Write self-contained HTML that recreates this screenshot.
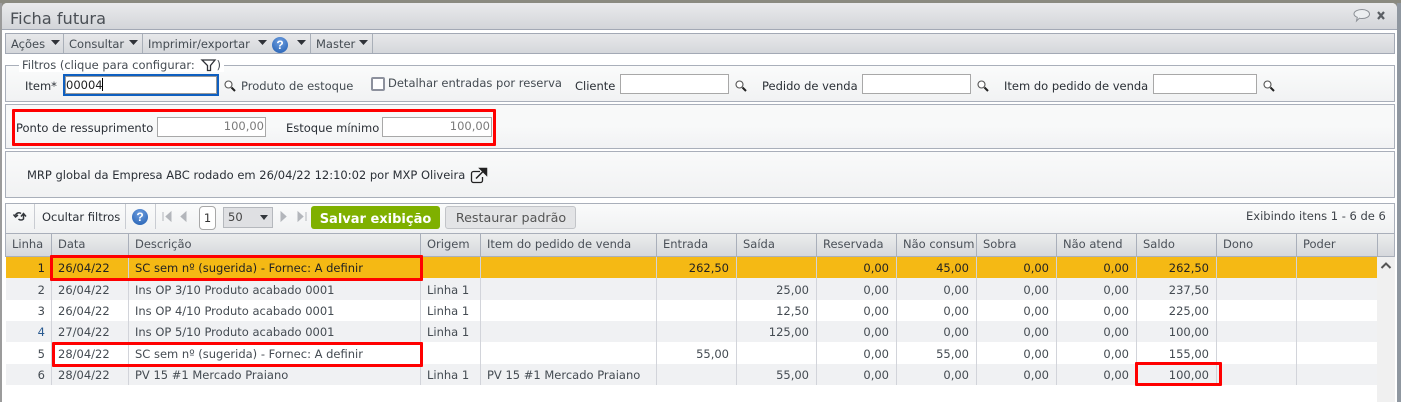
<!DOCTYPE html>
<html><head><meta charset="utf-8">
<style>
html,body{margin:0;padding:0;width:1401px;height:402px;overflow:hidden;background:#8d8d85}
*{box-sizing:border-box}
body{font-family:"DejaVu Sans","Liberation Sans",sans-serif;font-size:11.5px;color:#444b52;position:relative}
.a{position:absolute;white-space:nowrap}
.t{position:absolute;white-space:nowrap;line-height:14px}
#win{position:absolute;left:2px;top:3px;width:1395px;height:399px;background:#fff;border-radius:5px 5px 0 0}
.inp{position:absolute;background:#fff;border:1px solid #a8a8a8}
.r{text-align:right;color:#7b7b7b}
.red{position:absolute;border:3px solid #f00;z-index:5;border-radius:1px}
.row{position:absolute;left:6px;width:1371px}
.vl{position:absolute;width:1px;background:#d2d4da;top:257px;height:128px}
.c{position:absolute;white-space:nowrap;line-height:14px}
.h{position:absolute;white-space:nowrap;top:237px;line-height:14px;color:#4a5058;z-index:3}
.hs{position:absolute;top:233px;height:24px;width:1px;background:#a9afba;z-index:3}
.ts{position:absolute;width:1px;background:#a9afb8}
</style></head><body>
<div id="win"></div>
<div class="a" style="left:0;top:0;width:1401px;height:3px;background:#8a8a80"></div>
<div class="a" style="left:0;top:3px;width:2px;height:399px;background:#9b9b9b"></div>
<div class="a" style="left:1397px;top:3px;width:4px;height:399px;background:#8f97a0"></div>

<!-- Title -->
<div class="a" style="left:2px;top:3px;width:1395px;height:27px;background:linear-gradient(#e9eaec,#d3d5d9);border-bottom:1px solid #a3a9b5;border-radius:5px 5px 0 0"></div>
<div class="t" style="left:10px;top:10px;font-size:16.2px;line-height:17px;color:#4a4f55">Ficha futura</div>
<svg class="a" style="left:1353px;top:8px" width="34" height="16" viewBox="0 0 34 16">
<path d="M9 1.500c4 0 7.500 1.900 7.500 4.600S13 10.500 9 10.500c-1 0-1.800 0-2.600-.3L3.500 13l.8-3.700C2.300 8.500 1 7.300 1 6c0-2.700 4-4.500 8-4.500z" fill="#eceef0" stroke="#8b8f95" stroke-width="1"/>
<path d="M25 4l6 7M31 4l-6 7" stroke="#5b5f64" stroke-width="2.200"/>
</svg>

<!-- Menu bar -->
<div class="a" style="left:5px;top:33px;width:1390px;height:21px;background:linear-gradient(#e7e8ea,#d5d7db);border:1px solid #a3a9b5"></div>
<div class="t" style="left:11px;top:37px">Ações</div>
<div class="t" style="left:69px;top:37px">Consultar</div>
<div class="t" style="left:148px;top:37px">Imprimir/exportar</div>
<div class="t" style="left:316px;top:37px">Master</div>
<div class="ts" style="left:63px;top:34px;height:19px"></div>
<div class="ts" style="left:142px;top:34px;height:19px"></div>
<div class="ts" style="left:310px;top:34px;height:19px"></div>
<div class="ts" style="left:372px;top:34px;height:19px"></div>
<svg class="a" style="left:0;top:33px" width="380" height="21" viewBox="0 0 380 21">
<path d="M51 7h9l-4.500 5zM129 7h9l-4.500 5zM258 7h9l-4.500 5zM297 7h9l-4.500 5zM359 7h9l-4.500 5z" fill="#2f3238"/>
</svg>
<div class="a" style="left:272px;top:37px;width:16px;height:16px;border-radius:50%;background:radial-gradient(circle at 50% 30%,#6f9fe0,#1f5cb0);color:#fff;font:bold 12px/16px 'Liberation Sans',sans-serif;text-align:center">?</div>

<!-- Filters -->
<div class="a" style="left:5px;top:65px;width:1390px;height:37px;background:linear-gradient(#fafbfb,#f1f2f3);border:1px solid #a9afba"></div>
<div class="t" style="left:19px;top:59px;padding:0 3px;background:#fff;line-height:13px;height:13px">Filtros (clique para configurar: <span style="display:inline-block;width:18px"></span>)</div>
<svg class="a" style="left:200px;top:58px" width="18" height="15" viewBox="0 0 18 15"><path d="M2 2h13L10.500 7.500V12.500H7.500V7.500z" fill="none" stroke="#2f3238" stroke-width="1.300"/></svg>
<div class="t" style="left:25px;top:79px;color:#2a2f36">Item*</div>
<div class="inp" style="left:63px;top:74px;width:156px;height:22px;border:2px solid #0e5fc0;box-shadow:inset 0 0 0 1px #999"></div>
<div class="t" style="left:66px;top:78px;color:#222">00004</div>
<div class="a" style="left:102px;top:78px;width:1px;height:13px;background:#000"></div>
<div class="t" style="left:241px;top:79px">Produto de estoque</div>
<div class="a" style="left:371px;top:77px;width:14px;height:14px;border:2px solid #8d919d;border-radius:2px;background:#fff"></div>
<div class="t" style="left:388px;top:76px">Detalhar entradas por reserva</div>
<div class="t" style="left:575px;top:79px;color:#2a2f36">Cliente</div>
<div class="inp" style="left:620px;top:74px;width:109px;height:20px"></div>
<div class="t" style="left:762px;top:79px;color:#2a2f36">Pedido de venda</div>
<div class="inp" style="left:862px;top:74px;width:109px;height:20px"></div>
<div class="t" style="left:1004px;top:79px;color:#2a2f36">Item do pedido de venda</div>
<div class="inp" style="left:1153px;top:74px;width:104px;height:20px"></div>
<svg class="a" style="left:0;top:69px" width="1300" height="24" viewBox="0 0 1300 24">
<defs><g id="m"><circle cx="4.500" cy="4.500" r="3.500" fill="#fff" stroke="#555" stroke-width="1.100"/><path d="M7.500 7.500l3.500 3.500" stroke="#222" stroke-width="2"/></g></defs>
<use href="#m" x="224" y="11"/><use href="#m" x="735" y="11"/><use href="#m" x="977" y="11"/><use href="#m" x="1263" y="11"/>
</svg>

<!-- Ponto panel -->
<div class="a" style="left:5px;top:104px;width:1390px;height:45px;background:linear-gradient(#f8f9f9 0,#f8f9f9 50%,#f1f2f4 100%);border:1px solid #a9afba"></div>
<div class="red" style="left:12px;top:109px;width:484px;height:37px"></div>
<div class="t" style="left:16px;top:121px;color:#2a2f36">Ponto de ressuprimento</div>
<div class="inp r" style="left:157px;top:117px;width:109px;height:20px;line-height:17px;padding-right:1px">100,00</div>
<div class="t" style="left:286px;top:121px;color:#2a2f36">Estoque mínimo</div>
<div class="inp r" style="left:382px;top:117px;width:110px;height:20px;line-height:17px;padding-right:1px">100,00</div>

<!-- MRP panel -->
<div class="a" style="left:5px;top:151px;width:1390px;height:47px;background:linear-gradient(#f9fafa,#f1f2f3);border:1px solid #a9afba"></div>
<div class="t" style="left:27px;top:168px;color:#2a2f36">MRP global da Empresa ABC rodado em 26/04/22 12:10:02 por MXP Oliveira</div>
<svg class="a" style="left:470px;top:167px" width="18" height="18" viewBox="0 0 18 18">
<path d="M10 4.500H3.500a2 2 0 0 0-2 2v7a2 2 0 0 0 2 2h7a2 2 0 0 0 2-2V10" fill="none" stroke="#222" stroke-width="1.300"/>
<path d="M6 11.500L13.500 4M10 1.500h6.500V8z" fill="#222" stroke="#222" stroke-width="1.500"/>
</svg>

<!-- Grid toolbar -->
<div class="a" style="left:5px;top:203px;width:1390px;height:30px;background:linear-gradient(#fafbfb,#f0f1f2);border:1px solid #a9afba;border-bottom:0"></div>
<div class="ts" style="left:34px;top:204px;height:25px;background:#c9ccd2"></div>
<div class="ts" style="left:125px;top:204px;height:25px;background:#c9ccd2"></div>
<div class="ts" style="left:155px;top:204px;height:25px;background:#c9ccd2"></div>
<svg class="a" style="left:12px;top:209px" width="18" height="16" viewBox="0 0 18 16">
<path d="M9 4.500A3.500 3.500 0 0 0 3.500 6.500M1.500 5.500l2 2.500 2.500-2" fill="none" stroke="#33373c" stroke-width="1.500"/>
<path d="M6.500 10A3.500 3.500 0 0 0 11.500 10V5M9 7.500l2.500-3 2.500 3" fill="none" stroke="#33373c" stroke-width="1.500"/>
</svg>
<div class="t" style="left:42px;top:210px;color:#2a2f36">Ocultar filtros</div>
<div class="a" style="left:132px;top:209px;width:16px;height:16px;border-radius:50%;background:radial-gradient(circle at 50% 30%,#6f9fe0,#1f5cb0);color:#fff;font:bold 12px/16px 'Liberation Sans',sans-serif;text-align:center">?</div>
<svg class="a" style="left:160px;top:210px" width="150" height="14" viewBox="0 0 150 14">
<path d="M3 2v9M11 2L6 6.500 11 11zM26 2L21 6.500 26 11zM121 2L126 6.500 121 11zM138 2L143 6.500 138 11zM146 2v9" fill="#b3b6bb" stroke="#b3b6bb"/>
</svg>
<div class="a" style="left:199px;top:206px;width:17px;height:24px;border:1px solid #a8a8a8;border-radius:4px;background:#fff;text-align:center;line-height:22px;color:#333">1</div>
<div class="a" style="left:223px;top:207px;width:50px;height:21px;border:1px solid #b5b8bd;background:#dfe0e3;line-height:19px;padding-left:4px;color:#444">50</div>
<svg class="a" style="left:259px;top:214px" width="10" height="8" viewBox="0 0 10 8"><path d="M1 1h8L5 6z" fill="#33373c"/></svg>
<div class="a" style="left:311px;top:206px;width:129px;height:23px;background:#7fb000;border-radius:3px;color:#fff;font-weight:bold;font-size:13px;line-height:27px;text-align:center;overflow:hidden">Salvar exibição</div>
<div class="a" style="left:445px;top:206px;width:131px;height:23px;background:#e3e4e6;border:1px solid #c2c4c8;border-radius:3px;font-size:12.7px;line-height:21px;padding-left:1px;text-align:center;color:#555">Restaurar padrão</div>
<div class="t" style="left:1246px;top:209px;color:#3e4349">Exibindo itens 1 - 6 de 6</div>

<!-- Grid -->
<div class="a" style="left:5px;top:233px;width:1390px;height:24px;background:linear-gradient(#eceded,#d6d8dc);border:1px solid #a9afba"></div>
<div class="h" style="left:12px">Linha</div><div class="h" style="left:58px">Data</div><div class="h" style="left:135px">Descrição</div><div class="h" style="left:427px">Origem</div><div class="h" style="left:487px">Item do pedido de venda</div><div class="h" style="left:663px">Entrada</div><div class="h" style="left:743px">Saída</div><div class="h" style="left:823px">Reservada</div><div class="h" style="left:903px;width:73px;overflow:hidden">Não consum</div><div class="h" style="left:983px">Sobra</div><div class="h" style="left:1063px">Não atend</div><div class="h" style="left:1143px">Saldo</div><div class="h" style="left:1223px">Dono</div><div class="h" style="left:1303px">Poder</div>
<div class="hs" style="left:51px"></div><div class="hs" style="left:128px"></div><div class="hs" style="left:420px"></div><div class="hs" style="left:480px"></div><div class="hs" style="left:656px"></div><div class="hs" style="left:736px"></div><div class="hs" style="left:816px"></div><div class="hs" style="left:896px"></div><div class="hs" style="left:976px"></div><div class="hs" style="left:1056px"></div><div class="hs" style="left:1136px"></div><div class="hs" style="left:1216px"></div><div class="hs" style="left:1296px"></div><div class="hs" style="left:1377px"></div>

<div class="row" style="top:257px;height:21px;background:#f5b914"></div>
<div class="row" style="top:278px;height:22px;background:#f0f1f3"></div>
<div class="row" style="top:321px;height:21px;background:#f0f1f3"></div>
<div class="row" style="top:364px;height:21px;background:#f0f1f3"></div>
<div class="a" style="left:1377px;top:257px;width:18px;height:145px;background:#f0f0f0"></div>
<svg class="a" style="left:1379px;top:261px" width="14" height="10" viewBox="0 0 14 10"><path d="M2.500 7L7 2.500 11.500 7" fill="none" stroke="#555" stroke-width="2"/></svg>

<div class="vl" style="left:51px"></div><div class="vl" style="left:128px"></div><div class="vl" style="left:420px"></div><div class="vl" style="left:480px"></div><div class="vl" style="left:656px"></div><div class="vl" style="left:736px"></div><div class="vl" style="left:816px"></div><div class="vl" style="left:896px"></div><div class="vl" style="left:976px"></div><div class="vl" style="left:1056px"></div><div class="vl" style="left:1136px"></div><div class="vl" style="left:1216px"></div><div class="vl" style="left:1296px"></div>

<!-- Row 1 -->
<div style="color:#222">
<div class="c" style="right:1356px;top:261px">1</div><div class="c" style="left:58px;top:261px">26/04/22</div><div class="c" style="left:135px;top:261px">SC sem nº (sugerida) - Fornec: A definir</div>
<div class="c" style="right:672px;top:261px">262,50</div><div class="c" style="right:512px;top:261px">0,00</div><div class="c" style="right:432px;top:261px">45,00</div><div class="c" style="right:352px;top:261px">0,00</div><div class="c" style="right:272px;top:261px">0,00</div><div class="c" style="right:192px;top:261px">262,50</div>
</div>
<!-- Row 2 -->
<div class="c" style="right:1356px;top:283px">2</div><div class="c" style="left:58px;top:283px">26/04/22</div><div class="c" style="left:135px;top:283px">Ins OP 3/10 Produto acabado 0001</div><div class="c" style="left:427px;top:283px">Linha 1</div>
<div class="c" style="right:592px;top:283px">25,00</div><div class="c" style="right:512px;top:283px">0,00</div><div class="c" style="right:432px;top:283px">0,00</div><div class="c" style="right:352px;top:283px">0,00</div><div class="c" style="right:272px;top:283px">0,00</div><div class="c" style="right:192px;top:283px">237,50</div>
<!-- Row 3 -->
<div class="c" style="right:1356px;top:304px">3</div><div class="c" style="left:58px;top:304px">26/04/22</div><div class="c" style="left:135px;top:304px">Ins OP 4/10 Produto acabado 0001</div><div class="c" style="left:427px;top:304px">Linha 1</div>
<div class="c" style="right:592px;top:304px">12,50</div><div class="c" style="right:512px;top:304px">0,00</div><div class="c" style="right:432px;top:304px">0,00</div><div class="c" style="right:352px;top:304px">0,00</div><div class="c" style="right:272px;top:304px">0,00</div><div class="c" style="right:192px;top:304px">225,00</div>
<!-- Row 4 -->
<div class="c" style="right:1356px;top:325px;color:#2a5a90">4</div><div class="c" style="left:58px;top:325px">27/04/22</div><div class="c" style="left:135px;top:325px">Ins OP 5/10 Produto acabado 0001</div><div class="c" style="left:427px;top:325px">Linha 1</div>
<div class="c" style="right:592px;top:325px">125,00</div><div class="c" style="right:512px;top:325px">0,00</div><div class="c" style="right:432px;top:325px">0,00</div><div class="c" style="right:352px;top:325px">0,00</div><div class="c" style="right:272px;top:325px">0,00</div><div class="c" style="right:192px;top:325px">100,00</div>
<!-- Row 5 -->
<div class="c" style="right:1356px;top:347px">5</div><div class="c" style="left:58px;top:347px">28/04/22</div><div class="c" style="left:135px;top:347px">SC sem nº (sugerida) - Fornec: A definir</div>
<div class="c" style="right:672px;top:347px">55,00</div><div class="c" style="right:512px;top:347px">0,00</div><div class="c" style="right:432px;top:347px">55,00</div><div class="c" style="right:352px;top:347px">0,00</div><div class="c" style="right:272px;top:347px">0,00</div><div class="c" style="right:192px;top:347px">155,00</div>
<!-- Row 6 -->
<div class="c" style="right:1356px;top:368px">6</div><div class="c" style="left:58px;top:368px">28/04/22</div><div class="c" style="left:135px;top:368px">PV 15 #1 Mercado Praiano</div><div class="c" style="left:427px;top:368px">Linha 1</div><div class="c" style="left:487px;top:368px">PV 15 #1 Mercado Praiano</div>
<div class="c" style="right:592px;top:368px">55,00</div><div class="c" style="right:512px;top:368px">0,00</div><div class="c" style="right:432px;top:368px">0,00</div><div class="c" style="right:352px;top:368px">0,00</div><div class="c" style="right:272px;top:368px">0,00</div><div class="c" style="right:192px;top:368px">100,00</div>

<div class="red" style="left:50px;top:255px;width:373px;height:26px"></div>
<div class="red" style="left:52px;top:342px;width:371px;height:25px"></div>
<div class="red" style="left:1135px;top:362px;width:87px;height:24px"></div>
</body></html>
